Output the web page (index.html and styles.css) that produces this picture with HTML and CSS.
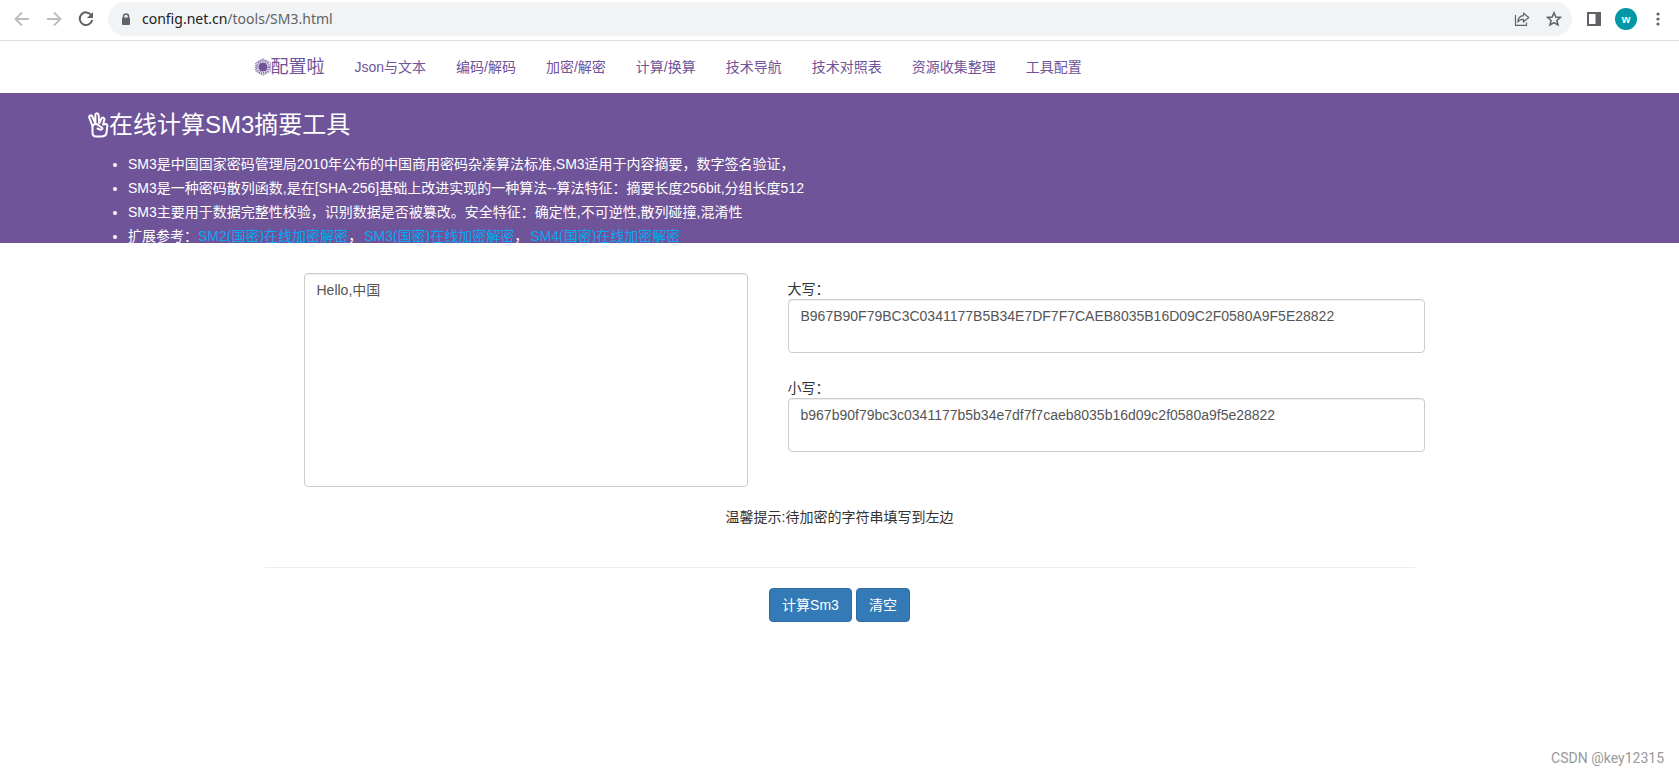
FILE: index.html
```html
<!DOCTYPE html>
<html lang="zh-CN">
<head>
<meta charset="utf-8">
<title>在线计算SM3摘要工具</title>
<link rel="stylesheet" href="styles.css">
</head>
<body>
<div class="toolbar">
  <button class="tool-btn faded" aria-label="后退"><svg viewBox="0 0 16 16" width="16" height="16"><path d="M15 8H2M8 1.5L1.500 8L8 14.500" fill="none" stroke="currentColor" stroke-width="1.8"/></svg></button>
  <button class="tool-btn faded" aria-label="前进"><svg viewBox="0 0 16 16" width="16" height="16"><path d="M1 8H14M8 1.500L14.500 8L8 14.500" fill="none" stroke="currentColor" stroke-width="1.8"/></svg></button>
  <button class="tool-btn" aria-label="刷新"><svg viewBox="0 0 16 16" width="16" height="16"><path d="M13.300 4.200A6.300 6.300 0 1 0 14.200 9" fill="none" stroke="currentColor" stroke-width="2"/><path d="M15 1V7H9Z" fill="currentColor"/></svg></button>
  <div class="address">
    <svg class="lock" viewBox="0 0 10 13" width="10" height="13"><path d="M2.500 5V3.300A2.500 2.300 0 0 1 7.500 3.300V5" fill="none" stroke="currentColor" stroke-width="1.500"/><rect x="1" y="4.500" width="8" height="7.500" rx="1" fill="currentColor"/></svg>
    <div class="url"><span class="host">config.net.cn</span>/tools/SM3.html</div>
    <button class="tool-btn" aria-label="分享"><svg viewBox="0 0 16 16" width="16" height="16" fill="none" stroke="currentColor" stroke-width="1.200"><path d="M1.500 4V14.400H12.500V11.500"/><path d="M9.500 2L14.700 6.500L9.500 11V8.300C6.500 8.200 5 9 3.800 11C4 7.500 6 5 9.500 4.700Z" stroke-linejoin="round"/></svg></button>
    <button class="tool-btn" aria-label="收藏"><svg viewBox="0 0 16 16" width="16" height="16"><path d="M8 1.800L9.800 6L14.400 6.400L10.900 9.400L12 13.900L8 11.500L4 13.900L5.100 9.400L1.600 6.400L6.200 6Z" fill="none" stroke="currentColor" stroke-width="1.500"/></svg></button>
  </div>
  <button class="tool-btn" aria-label="侧边栏"><svg viewBox="0 0 14 14" width="14" height="14"><path d="M1 1H13V13H1Z" fill="none" stroke="currentColor" stroke-width="2"/><path d="M8.500 1H13V13H8.500Z" fill="currentColor"/></svg></button>
  <button class="avatar" aria-label="账户">w</button>
  <button class="tool-btn" aria-label="菜单"><svg viewBox="0 0 14 14" width="14" height="14" fill="currentColor"><circle cx="7" cy="2" r="1.600"/><circle cx="7" cy="7" r="1.600"/><circle cx="7" cy="12" r="1.600"/></svg></button>
</div>

<nav class="navbar">
  <div class="nav-inner">
    <a class="brand" href="#"><svg viewBox="0 0 16 18" width="16" height="18"><path d="M8 0.800L15.300 5V13L8 17.200L0.700 13V5Z" fill="none" stroke="currentColor" stroke-width="1.200" stroke-dasharray="1.200 .8" opacity=".75"/><circle cx="8" cy="9" r="6" fill="none" stroke="currentColor" stroke-width="2.200" stroke-dasharray="1.200 .8" opacity=".8"/><circle cx="8" cy="9" r="4.600" fill="currentColor"/></svg>配置啦</a>
    <a href="#">Json与文本</a>
    <a href="#">编码/解码</a>
    <a href="#">加密/解密</a>
    <a href="#">计算/换算</a>
    <a href="#">技术导航</a>
    <a href="#">技术对照表</a>
    <a href="#">资源收集整理</a>
    <a href="#">工具配置</a>
  </div>
</nav>

<header class="banner">
  <h1><svg viewBox="0 0 21 26" width="21" height="26" fill="none" stroke="currentColor" stroke-width="2" stroke-linejoin="round" stroke-linecap="round"><path d="M4.500 14L1.200 5.500C.8 3.500 3.400 2.500 4.300 4.500L7.500 11.500L7.300 3C7.500 .8 10.300 .8 10.600 3L11.300 11"/><path d="M11.300 11L13.500 6.500C14.800 4.800 17 6 16.300 8L15 12.500L18 12C19.500 12.500 19.500 14 19.200 15L18.500 21C18 23.500 16 24.500 13 24.500H8C5.500 24.500 4.500 23 4.500 20.500V14C6 11.500 8.500 11.500 10 13L14 15.500C15 17 13.500 18 12 17.500L9.500 16.500"/></svg>在线计算SM3摘要工具</h1>
  <ul>
    <li>SM3是中国国家密码管理局2010年公布的中国商用密码杂凑算法标准,SM3适用于内容摘要，数字签名验证，</li>
    <li>SM3是一种密码散列函数,是在[SHA-256]基础上改进实现的一种算法--算法特征：摘要长度256bit,分组长度512</li>
    <li>SM3主要用于数据完整性校验，识别数据是否被篡改。安全特征：确定性,不可逆性,散列碰撞,混淆性</li>
    <li>扩展参考：<a href="#">SM2(国密)在线加密解密</a>，<a href="#">SM3(国密)在线加密解密</a>，<a href="#">SM4(国密)在线加密解密</a></li>
  </ul>
</header>

<main class="container">
  <div class="panes">
    <textarea class="field source" aria-label="待加密的字符串">Hello,中国</textarea>
    <div class="results">
      <div class="result">
        <label for="upper">大写：</label>
        <textarea class="field" id="upper">B967B90F79BC3C0341177B5B34E7DF7F7CAEB8035B16D09C2F0580A9F5E28822</textarea>
      </div>
      <div class="result">
        <label for="lower">小写：</label>
        <textarea class="field" id="lower">b967b90f79bc3c0341177b5b34e7df7f7caeb8035b16d09c2f0580a9f5e28822</textarea>
      </div>
    </div>
  </div>
  <p class="hint">温馨提示:待加密的字符串填写到左边</p>
  <hr>
  <div class="actions">
    <button class="btn">计算Sm3</button>
    <button class="btn">清空</button>
  </div>
</main>
<footer class="watermark">CSDN @key12315</footer>
</body>
</html>
```
FILE: styles.css
```css
* { box-sizing: border-box; }
body {
  margin: 0;
  min-height: 100vh;
  display: flex;
  flex-direction: column;
  background: #fff;
  color: #333;
  font: 14px/20px "Liberation Sans", "Noto Sans CJK SC", sans-serif;
}
button { font-family: inherit; cursor: pointer; }
a { text-decoration: none; }

/* browser toolbar */
.toolbar {
  display: flex;
  align-items: center;
  gap: 8px;
  padding: 2px 9px 4px 10px;
  border-bottom: 1px solid #dadce0;
  color: #5f6368;
}
.tool-btn {
  display: flex;
  align-items: center;
  justify-content: center;
  width: 24px;
  height: 24px;
  padding: 0;
  border: 0;
  background: none;
  color: inherit;
}
.faded { color: #babcbe; }
.address {
  flex: 1;
  display: flex;
  align-items: center;
  gap: 8px;
  height: 34px;
  margin: 0 2px;
  padding: 0 6px 0 13px;
  border-radius: 17px;
  background: #f1f3f4;
}
.url {
  flex: 1;
  padding-left: 3px;
  font-family: "Noto Sans", sans-serif;
}
.host { color: #202124; }
.avatar {
  width: 22px;
  height: 22px;
  margin: 0 1px;
  padding: 0;
  border: 0;
  border-radius: 50%;
  background: #0097a7;
  color: #fff;
  font-size: 11px;
  font-weight: 700;
  line-height: 20px;
}

/* site navigation */
.navbar { color: #6f5499; }
.nav-inner {
  display: flex;
  align-items: center;
  gap: 30px;
  max-width: 1170px;
  height: 52px;
  margin: 0 auto;
}
.nav-inner a { color: inherit; white-space: nowrap; }
.nav-inner .brand { display: flex; align-items: center; font-size: 18px; }

/* intro banner */
.banner {
  height: 150px;
  padding: 17px 88px 0;
  overflow: hidden;
  background: #6f5499;
  color: #fff;
}
h1 {
  display: flex;
  align-items: center;
  margin: 0 0 12px;
  font-size: 24px;
  line-height: 30px;
  font-weight: 400;
}
ul { margin: 0; padding-left: 40px; line-height: 24px; }
.banner a { color: #03a9f4; }
.banner a + a { margin-left: 2px; }

/* form */
.container {
  width: 100%;
  max-width: 1170px;
  margin: 0 auto;
  padding-top: 30px;
}
.panes {
  display: grid;
  grid-template-columns: 444fr 637fr;
  gap: 40px;
  padding-left: 49px;
}
.field {
  display: block;
  width: 100%;
  height: 54px;
  padding: 6px 12px;
  border: 1px solid #ccc;
  border-radius: 4px;
  box-shadow: inset 0 1px 1px rgba(0, 0, 0, .075);
  background: #fff;
  color: #555;
  font: inherit;
  resize: none;
}
.source { height: 214px; }
.results {
  display: flex;
  flex-direction: column;
  gap: 25px;
  padding-top: 6px;
}
label { display: block; }
.hint { margin: 20px 0 40px; text-align: center; }
hr { margin: 0 10px 20px; border: 0; border-top: 1px solid #eee; }
.actions { display: flex; justify-content: center; gap: 4px; }
.btn {
  padding: 6px 12px;
  border: 1px solid #2e6da4;
  border-radius: 4px;
  background: #337ab7;
  color: #fff;
  font-size: 14px;
  line-height: 20px;
}
.watermark {
  margin-top: auto;
  padding: 0 15px 7px;
  text-align: right;
  color: #999;
  font-family: Roboto, sans-serif;
}
```
